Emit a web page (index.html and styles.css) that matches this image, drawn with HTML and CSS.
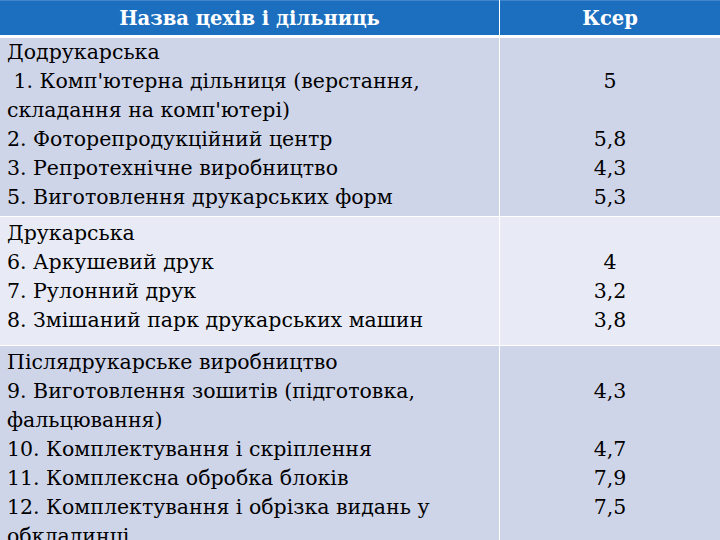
FILE: index.html
```html
<!DOCTYPE html>
<html lang="uk">
<head>
<meta charset="utf-8">
<link rel="stylesheet" href="styles.css">
</head>
<body>
<table class="grid">
  <thead>
    <tr>
      <th class="c-name">Назва цехів і дільниць</th>
      <th class="c-val">Ксер</th>
    </tr>
  </thead>
  <tbody>
    <tr class="r1 dark">
      <td class="c-name">Додрукарська<br>&nbsp;1. Комп'ютерна дільниця (верстання,<br>складання на комп'ютері)<br>2. Фоторепродукційний центр<br>3. Репротехнічне виробництво<br>5. Виготовлення друкарських форм</td>
      <td class="c-val"><br>5<br><br>5,8<br>4,3<br>5,3</td>
    </tr>
    <tr class="r2 light">
      <td class="c-name">Друкарська<br>6. Аркушевий друк<br>7. Рулонний друк<br>8. Змішаний парк друкарських машин</td>
      <td class="c-val"><br>4<br>3,2<br>3,8</td>
    </tr>
    <tr class="r3 dark">
      <td class="c-name">Післядрукарське виробництво<br>9. Виготовлення зошитів (підготовка,<br>фальцювання)<br>10. Комплектування і скріплення<br>11. Комплексна обробка блоків<br>12. Комплектування і обрізка видань у<br>обкладинці</td>
      <td class="c-val"><br>4,3<br><br>4,7<br>7,9<br>7,5<br><br></td>
    </tr>
  </tbody>
</table>
</body>
</html>
```

FILE: styles.css
```css
html, body {
  margin: 0;
  padding: 0;
  width: 720px;
  height: 540px;
  overflow: hidden;
  background: #ffffff;
}
.grid {
  width: 720px;
  border-collapse: collapse;
  font-family: "DejaVu Serif", "Liberation Serif", serif;
  font-size: 20.5px;
  line-height: 29px;
  color: #000000;
}
.grid th {
  background: #1c6fbf;
  color: #ffffff;
  font-weight: bold;
  font-size: 19.5px;
  height: 34px;
  padding: 0;
  text-align: center;
  border-bottom: 3px solid #ffffff;
  border-top: 1px solid #3f86cc;
}
.grid td {
  padding: 0 0 0 7px;
  vertical-align: top;
  border-bottom: 1px solid #ffffff;
}
.c-name {
  width: 492px;
  border-right: 1px solid #ffffff;
}
.grid td.c-val {
  text-align: center;
  padding: 0;
}
.grid .r2 td, .grid .r3 td {
  padding-top: 2px;
}
.dark td { background: #cfd5e9; }
.light td { background: #e8ebf5; }
.r1 td { height: 178px; }
.r2 td { height: 126px; }
```
